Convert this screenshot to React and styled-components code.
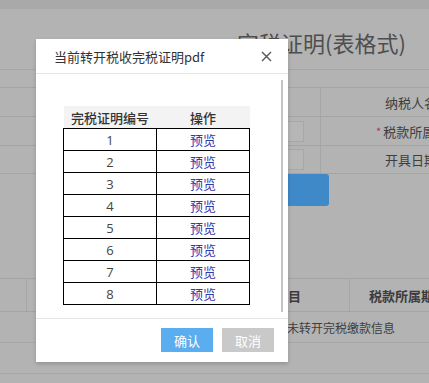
import React from "react";
import styled, { createGlobalStyle } from "styled-components";

const Global = createGlobalStyle`
  html, body { margin: 0; padding: 0; }
  body {
    width: 429px; height: 383px; overflow: hidden;
    font-family: "Noto Sans CJK SC", "Noto Sans", sans-serif;
  }
`;

const Page = styled.div`
  position: relative;
  width: 429px;
  height: 383px;
  overflow: hidden;
  background: #b3b3b3;
  display: flex;
  flex-direction: column;
`;

const TopBand = styled.div`
  height: 9px;
  background: #a9a9a9;
  flex: none;
`;

const TitleRow = styled.div`
  height: 61px;
  flex: none;
  box-sizing: border-box;
  border-bottom: 1px solid #a6a6a6;
  padding: 20px 0 0 237px;
  font-size: 22px;
  line-height: 26px;
  color: #4e4e4e;
  white-space: nowrap;
`;

const FormArea = styled.div`
  margin-top: 17px;
  border-top: 1px solid #a4a4a4;
  display: flex;
  flex-direction: column;
  flex: none;
`;

const FormRow = styled.div`
  height: ${(p) => p.$h}px;
  box-sizing: border-box;
  border-bottom: 1px solid #a4a4a4;
  display: grid;
  grid-template-columns: 321px 1fr;
`;

const FieldCell = styled.div`
  display: flex;
  align-items: center;
  justify-content: flex-end;
  padding-right: 16px;
  border-right: 1px solid #a6a6a6;
`;

const InputBox = styled.div`
  width: 110px;
  height: 21px;
  box-sizing: border-box;
  border: 1px solid #a8a8a8;
  background: #b6b6b6;
`;

const LabelCell = styled.div`
  display: flex;
  align-items: center;
  padding-left: ${(p) => (p.$star ? 55 : 64)}px;
  font-size: 13px;
  color: #3e3e3e;
  white-space: nowrap;
`;

const Star = styled.span`
  color: #a0424f;
  margin-right: 2px;
  font-size: 11px;
`;

const ButtonRow = styled.div`
  display: flex;
  padding-left: 236px;
  flex: none;
`;

const BlueBtn = styled.div`
  width: 93px;
  height: 32px;
  border-radius: 3px;
  background: #3f89c8;
`;

const BgTable = styled.div`
  margin-top: 72px;
  display: flex;
  flex-direction: column;
  flex: none;
`;

const BgHead = styled.div`
  height: 34px;
  box-sizing: border-box;
  border-top: 1px solid #a4a4a4;
  border-bottom: 1px solid #a4a4a4;
  display: grid;
  grid-template-columns: 27px 323px 1fr;
  font-size: 13px;
  font-weight: 700;
  color: #3c3c3c;
`;

const HeadCell = styled.div`
  display: flex;
  align-items: center;
  justify-content: ${(p) => p.$align || "flex-start"};
  padding-left: ${(p) => p.$pl || 0}px;
  border-right: ${(p) => (p.$line ? "1px solid #a6a6a6" : "none")};
  white-space: nowrap;
`;

const BgRow = styled.div`
  height: 31px;
  box-sizing: border-box;
  border-bottom: 1px solid #a8a8a8;
  display: flex;
  align-items: center;
  padding-left: 263px;
  font-size: 12px;
  color: #3e3e3e;
  white-space: nowrap;
`;

const Dialog = styled.div`
  position: absolute;
  left: 36px;
  top: 39px;
  width: 252px;
  height: 323px;
  background: #fff;
  box-shadow: 0 2px 4px rgba(0, 0, 0, 0.18);
  display: flex;
  flex-direction: column;
`;

const DialogHeader = styled.div`
  height: 35px;
  flex: none;
  box-sizing: border-box;
  border-bottom: 1px solid #e6e6e6;
  display: flex;
  align-items: center;
  justify-content: space-between;
  padding: 0 16px 0 18px;
`;

const DialogTitle = styled.div`
  font-size: 13px;
  color: #333;
  white-space: nowrap;
`;

const Close = styled.svg`
  width: 11px;
  height: 11px;
`;

const DialogBody = styled.div`
  height: 244px;
  flex: none;
  display: flex;
  box-sizing: border-box;
  padding-right: 5px;
`;

const BodyContent = styled.div`
  flex: 1;
  padding: 32px 0 0 27px;
`;

const ScrollThumb = styled.div`
  width: 2px;
  margin: 6px 0 6px;
  background: #c4c4c4;
`;

const Table = styled.table`
  border-collapse: collapse;
  width: 186px;
  table-layout: fixed;
`;

const Th = styled.th`
  height: 22px;
  padding: 0;
  background: #f3f3f3;
  font-size: 13px;
  font-weight: 500;
  color: #333;
  text-align: center;
  width: ${(p) => p.$w}px;
`;

const Td = styled.td`
  height: 21px;
  padding: 0;
  border: 1px solid #000;
  text-align: center;
  font-size: 13px;
  line-height: 20px;
  font-family: ${(p) => (p.$num ? '"Open Sans", sans-serif' : '"Noto Sans CJK SC", sans-serif')};
  color: ${(p) => (p.$link ? "#3438ae" : "#444")};
`;

const DialogFooter = styled.div`
  flex: 1;
  border-top: 1px solid #e6e6e6;
  display: flex;
  justify-content: flex-end;
  align-items: flex-start;
  padding: 9px 14px 0 0;
  gap: 9px;
`;

const Btn = styled.div`
  width: 52px;
  height: 24px;
  display: flex;
  align-items: center;
  justify-content: center;
  font-size: 13px;
  color: #fff;
  background: ${(p) => (p.$primary ? "#5aaeef" : "#c9c9c9")};
`;

export default function App() {
  const rows = [1, 2, 3, 4, 5, 6, 7, 8];
  return (
    <>
      <Global />
      <Page>
        <TopBand />
        <TitleRow>完税证明(表格式)</TitleRow>
        <FormArea>
          <FormRow $h={29}>
            <FieldCell />
            <LabelCell>纳税人名称</LabelCell>
          </FormRow>
          <FormRow $h={29}>
            <FieldCell>
              <InputBox />
            </FieldCell>
            <LabelCell $star>
              <Star>*</Star>税款所属期
            </LabelCell>
          </FormRow>
          <FormRow $h={28}>
            <FieldCell>
              <InputBox />
            </FieldCell>
            <LabelCell>开具日期</LabelCell>
          </FormRow>
        </FormArea>
        <ButtonRow>
          <BlueBtn />
        </ButtonRow>
        <BgTable>
          <BgHead>
            <HeadCell $line />
            <HeadCell $line $pl={248}>项目</HeadCell>
            <HeadCell $pl={19}>税款所属期</HeadCell>
          </BgHead>
          <BgRow>暂无未转开完税缴款信息</BgRow>
          <BgRow />
        </BgTable>

        <Dialog>
          <DialogHeader>
            <DialogTitle>当前转开税收完税证明pdf</DialogTitle>
            <Close viewBox="0 0 11 11">
              <path d="M1 1 L10 10 M10 1 L1 10" stroke="#555" strokeWidth="1.4" fill="none" />
            </Close>
          </DialogHeader>
          <DialogBody>
            <BodyContent>
              <Table>
                <thead>
                  <tr>
                    <Th $w={93}>完税证明编号</Th>
                    <Th $w={93}>操作</Th>
                  </tr>
                </thead>
                <tbody>
                  {rows.map((n) => (
                    <tr key={n}>
                      <Td $num>{n}</Td>
                      <Td $link>预览</Td>
                    </tr>
                  ))}
                </tbody>
              </Table>
            </BodyContent>
            <ScrollThumb />
          </DialogBody>
          <DialogFooter>
            <Btn $primary>确认</Btn>
            <Btn>取消</Btn>
          </DialogFooter>
        </Dialog>
      </Page>
    </>
  );
}
